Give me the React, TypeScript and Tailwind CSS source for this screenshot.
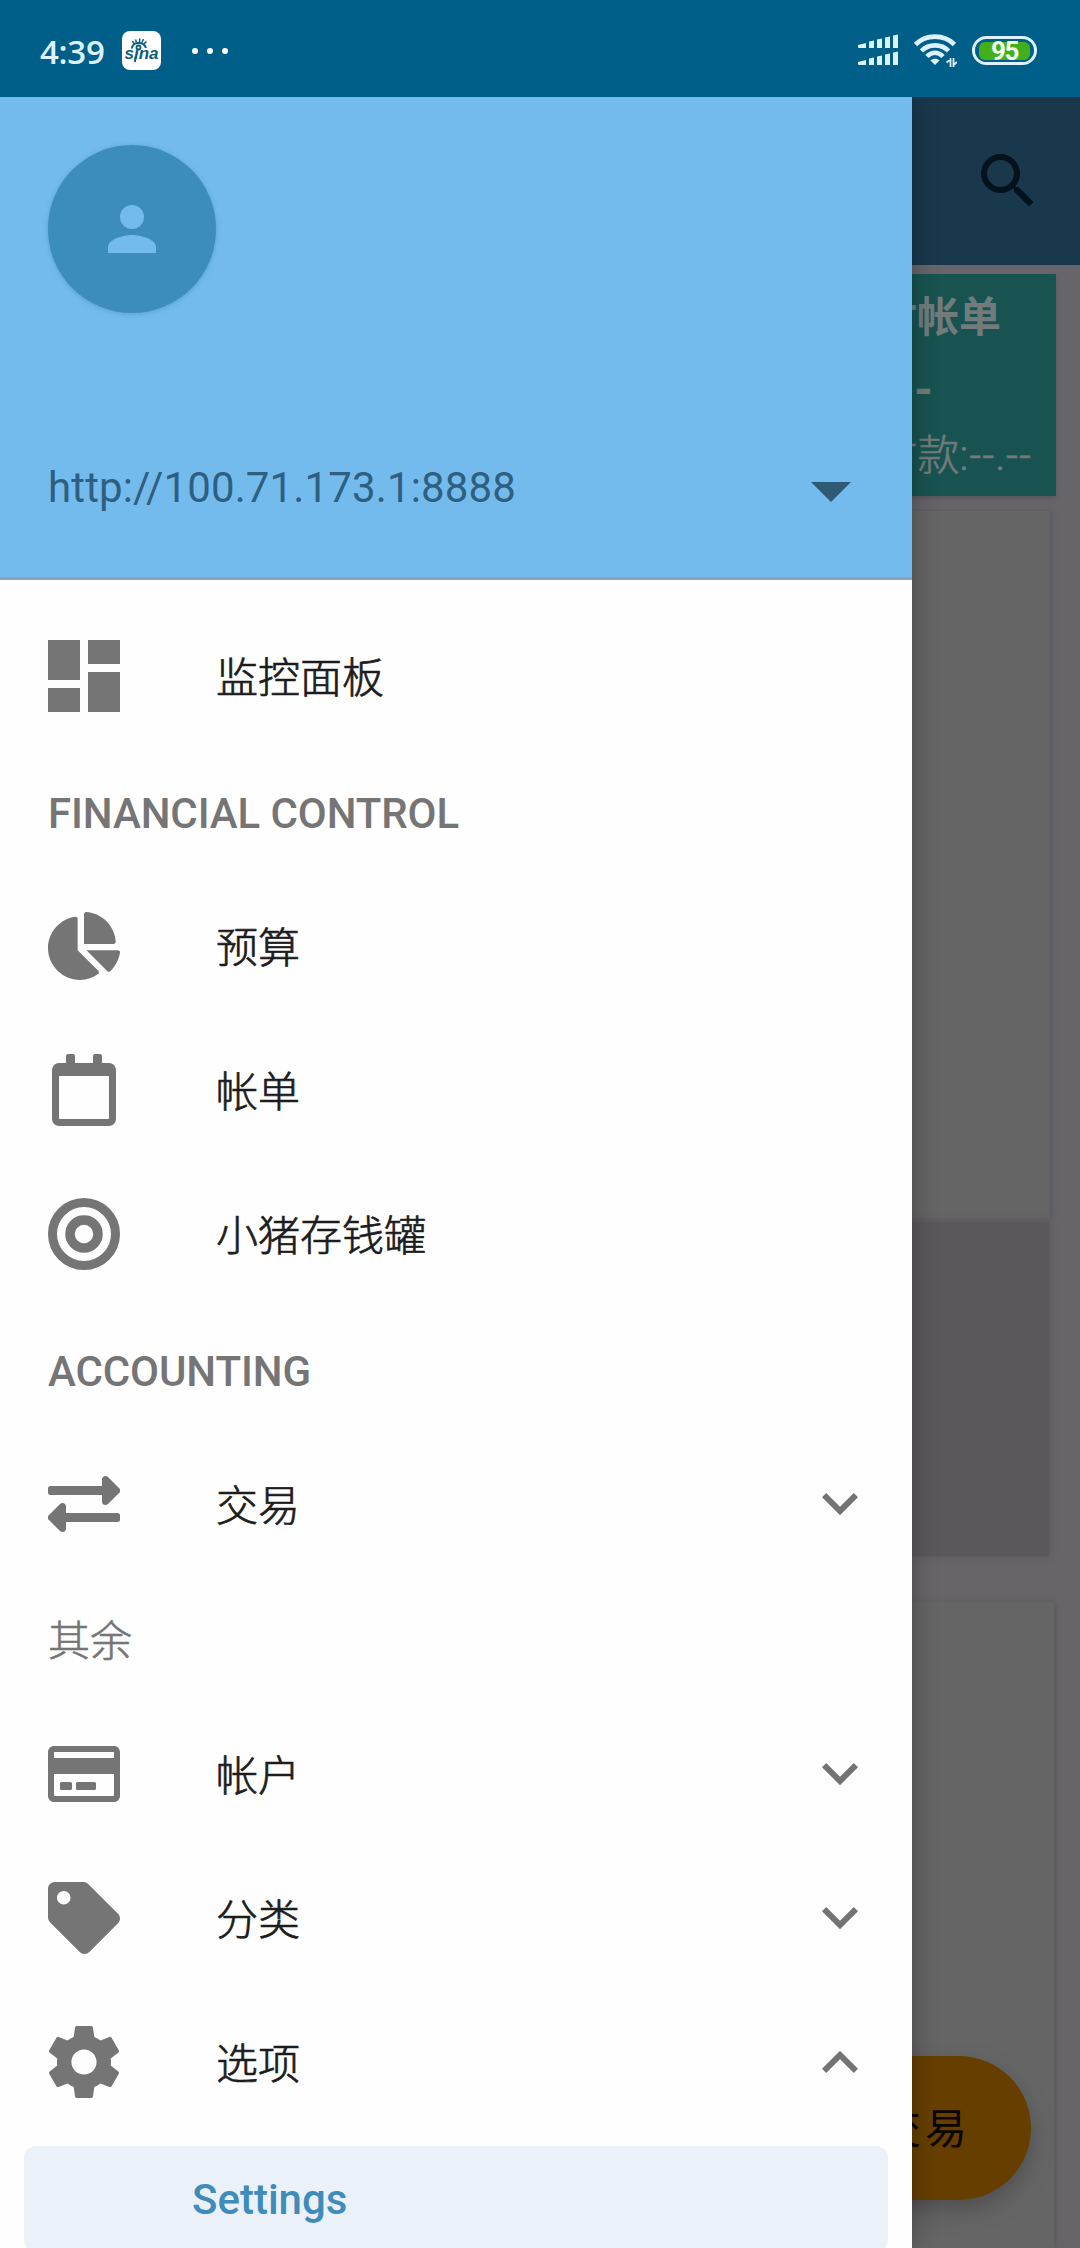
import type { ReactNode } from "react";
import { FaChartPie, FaRegCreditCard, FaTag } from "react-icons/fa";
import { MdSearch } from "react-icons/md";

const DashboardIcon = () => (
  <svg className="size-[72px]" viewBox="0 0 72 72" fill="currentColor">
    <path d="M0 0h32v40H0zM40 0h32v24H40zM0 48h32v24H0zM40 32h32v40H40z" />
  </svg>
);

const CalendarIcon = () => (
  <svg className="size-[72px]" viewBox="0 0 72 72" fill="currentColor">
    <path
      fillRule="evenodd"
      d="M20 0h5a2 2 0 0 1 2 2v7h18V2a2 2 0 0 1 2-2h5a2 2 0 0 1 2 2v7h7a7 7 0 0 1 7 7v49a7 7 0 0 1-7 7H11a7 7 0 0 1-7-7V16a7 7 0 0 1 7-7h7V2a2 2 0 0 1 2-2zM11 22v42a1 1 0 0 0 1 1h48a1 1 0 0 0 1-1V22z"
    />
  </svg>
);

const TargetIcon = () => (
  <svg className="size-[72px]" viewBox="0 0 72 72" fill="none" stroke="currentColor">
    <circle cx="36" cy="36" r="31.5" strokeWidth="9" />
    <circle cx="36" cy="36" r="14" strokeWidth="9.5" />
  </svg>
);

const ExchangeIcon = () => (
  <svg className="size-[72px]" viewBox="0 0 72 72" fill="currentColor">
    <path d="M2.500 18H54v-6.500c0-3.200 3.700-4.700 6-2.500l11 11a3.500 3.500 0 0 1 0 5L60 36c-2.300 2.300-6 .8-6-2.500V27H2.500A2.500 2.500 0 0 1 0 24.500v-4A2.500 2.500 0 0 1 2.500 18z" />
    <path d="M69.500 45H18v-6.500c0-3.200-3.700-4.700-6-2.500L1 47a3.500 3.500 0 0 0 0 5l11 11c2.300 2.300 6 .8 6-2.500V54h51.500a2.500 2.500 0 0 0 2.500-2.500v-4a2.500 2.500 0 0 0-2.500-2.500z" />
  </svg>
);

const GearIcon = () => (
  <svg className="size-[72px]" viewBox="2 2 20 20" fill="currentColor">
    <path d="M19.430 12.980c.04-.32.07-.64.07-.98s-.03-.66-.07-.98l2.110-1.650c.19-.15.24-.42.12-.64l-2-3.460c-.12-.22-.39-.3-.61-.22l-2.490 1c-.52-.4-1.080-.73-1.690-.98l-.38-2.650C14.460 2.180 14.250 2 14 2h-4c-.25 0-.46.18-.49.42l-.38 2.650c-.61.25-1.170.59-1.690.98l-2.490-1c-.23-.09-.49 0-.61.22l-2 3.460c-.13.22-.07.49.12.64l2.110 1.650c-.04.32-.07.65-.07.98s.03.66.07.98l-2.110 1.650c-.19.15-.24.42-.12.64l2 3.460c.12.22.39.3.61.22l2.490-1c.52.4 1.080.73 1.690.98l.38 2.650c.03.24.24.42.49.42h4c.25 0 .46-.18.49-.42l.38-2.650c.61-.25 1.170-.59 1.690-.98l2.490 1c.23.09.49 0 .61-.22l2-3.460c.12-.22.07-.49-.12-.64l-2.110-1.650zM12 15.500c-1.930 0-3.500-1.570-3.500-3.500s1.570-3.500 3.500-3.500 3.500 1.570 3.500 3.500-1.570 3.500-3.500 3.500z" />
  </svg>
);

const Chevron = ({ up = false }: { up?: boolean }) => (
  <svg
    className={up ? "ml-auto h-[22px] w-9 rotate-180 text-[#737373]" : "ml-auto h-[22px] w-9 text-[#737373]"}
    viewBox="0 0 36 22"
    fill="currentColor"
  >
    <path d="M4.200 0L18 13.800 31.800 0 36 4.200l-18 18-18-18z" />
  </svg>
);

function Item({ icon, label, chevron }: { icon: ReactNode; label: string; chevron?: "up" | "down" }) {
  return (
    <div className="flex h-36 shrink-0 items-center pr-[54px] pl-12">
      <div className="flex size-[72px] items-center justify-center text-[#757575]">{icon}</div>
      <span className="ml-24 pt-[5px] text-[42px] leading-[50px] font-light text-[#1c1c1c] [-webkit-text-stroke:0.7px_#1c1c1c]">
        {label}
      </span>
      {chevron && <Chevron up={chevron === "up"} />}
    </div>
  );
}

function Section({ children }: { children: ReactNode }) {
  return (
    <div className="flex h-[126px] shrink-0 items-center px-12 pt-[5px] text-[42px] leading-[50px] font-medium tracking-[-0.1px] text-[#757575]">
      {children}
    </div>
  );
}

function StatusBar() {
  return (
    <div className="flex h-[97px] shrink-0 items-center bg-[#005f89] pt-1 pr-[43px] pl-[40px] text-[#def1ff]">
      <span className="w-[82px] pt-[1px] font-['Open_Sans'] text-[33px] leading-none font-semibold tracking-[-0.3px]">
        4:39
      </span>
      <div className="flex h-[39px] w-[39px] items-center justify-center rounded-[8px] bg-white text-[#0b5d80]">
        <svg className="size-[39px]" viewBox="0 0 39 39" fill="none" stroke="currentColor">
          <path d="M10 17.500C10 10.500 22 10 24 17" strokeWidth="2" />
          <path d="M12 12.500l-1.500-2.500M14.500 11.500l-1-3M17.500 11l.3-3.500M20 11.500l1.500-3.500M22 13l2.500-2.500" strokeWidth="1.500" />
          <circle cx="16.500" cy="16.500" r="2" strokeWidth="1.800" />
          <text
            x="2.500"
            y="27.500"
            textLength="34"
            lengthAdjust="spacingAndGlyphs"
            fill="currentColor"
            stroke="none"
            className="font-['Liberation_Sans'] text-[16px] font-bold italic"
          >
            sına
          </text>
          <path d="M14 25l-1.200 6" strokeWidth="2" />
        </svg>
      </div>
      <div className="ml-[31px] flex gap-[9px]">
        <i className="size-[6px] rounded-full bg-white" />
        <i className="size-[6px] rounded-full bg-white" />
        <i className="size-[6px] rounded-full bg-white" />
      </div>
      <svg className="ml-auto h-[33px] w-[41px]" viewBox="0 0 41 33" fill="currentColor">
        <path d="M0 11l8-2v5H1a1 1 0 0 1-1-1zM11 7.500l5-1V14h-5zM19 5.500l5-1V14h-5zM27 3.500l5-1V14h-5zM35 1.500l5-1V14h-5z" />
        <path d="M0 28l8-2v5H1a1 1 0 0 1-1-1zM11 24.500l5-1V31h-5zM19 22.500l5-1V31h-5zM27 20.500l5-1V31h-5zM35 18.500l5-1V31h-5z" />
      </svg>
      <svg className="ml-[15px] h-[34px] w-[43px]" viewBox="0 0 43 34" fill="none" stroke="currentColor" strokeWidth="4.600">
        <path d="M1.500 10.500C12 0 30 0 40.500 10.500M7.500 17C14.500 9.500 27.500 9.500 34.500 17M13 22.500c4.500-5 11.500-5 16 0" />
        <path d="M21 31l-4.500-4.500c2-2.500 7-2.500 9 0z" fill="currentColor" stroke="none" />
        <path d="M36.500 24v9M32.500 28.500l4-3M39.500 33v-9M43 28l-3.500 3" strokeWidth="1.800" />
      </svg>
      <div className="ml-[15px] flex h-[29px] w-[65px] items-center justify-center rounded-full border-[3px] border-current">
        <div className="flex h-[18px] w-[51px] items-center justify-center rounded-[6px] bg-[#41b01b] font-['Roboto'] text-[26px] leading-none font-bold tracking-[-1.5px] text-[#f2fff0]">
          95
        </div>
      </div>
    </div>
  );
}

/** Home screen, dimmed while the drawer is open. */
function DimmedHome() {
  return (
    <div className="flex h-full flex-col bg-[#676569]">
      <div className="flex h-[168px] shrink-0 items-center justify-end bg-[#19384c] pr-9">
        <MdSearch className="size-[72px] text-[#04121b]" />
      </div>
      <div className="mt-[9px] mr-6 flex h-[222px] shrink-0 flex-col items-end overflow-hidden bg-[#185351] text-[#727b7b] shadow-md">
        <div className="mt-[16px] mr-[55px] text-[42px] leading-[56px] font-bold">待付帐单</div>
        <div className="mt-[20px] mr-[123px] text-[48px] leading-[48px] font-bold">-</div>
        <div className="mt-[17px] mr-[24px] text-[42px] leading-[50px] font-light [-webkit-text-stroke:0.6px_#727b7b]">
          已付款<span className="tracking-[0.9px]">:--.--</span>
        </div>
      </div>
      <div className="mt-[15px] mr-[30px] h-[707px] shrink-0 bg-[#656565] shadow-[2px_0_5px_#59595b]" />
      <div className="mt-[4px] mr-[31px] h-[334px] shrink-0 bg-[#5a585b] shadow-[0_0_6px_#565458]" />
      <div className="mt-[46px] mr-[26px] flex grow items-end justify-end bg-[#656565] shadow-[2px_0_5px_#59595b]">
        <div className="mr-[23px] mb-12 flex h-36 w-[300px] items-center justify-end rounded-full bg-[#663f00] pt-[4px] pr-[60px] text-[42px] leading-[50px] tracking-[4px] text-[#0a0600] shadow-[0_10px_20px_#505052]">
          交易
        </div>
      </div>
    </div>
  );
}

function Drawer() {
  return (
    <div className="absolute inset-y-0 left-0 flex w-[912px] flex-col overflow-hidden bg-[#fefefe] shadow-[0_0_24px_#00000050]">
      <div className="flex h-[483px] shrink-0 flex-col border-b-[3px] border-[#8fa3b3] bg-[#74bbed] pt-[48px] pr-[61px] pl-12">
        <div className="flex size-[168px] items-center justify-center rounded-full bg-[#3c8cbc] shadow-[0_1px_5px_#3c8cbc90]">
          <svg className="size-12" viewBox="0 0 48 48" fill="#74bbed">
            <circle cx="24" cy="12" r="12" />
            <path d="M0 48v-6c0-8 16-12 24-12s24 4 24 12v6z" />
          </svg>
        </div>
        <div className="mt-[150px] flex items-center justify-between text-[#2f5f80]">
          <span className="text-[42px] leading-[50px] tracking-[0.14px]">http://100.71.173.1:8888</span>
          <svg className="mt-2 h-5 w-10" viewBox="0 0 40 20" fill="#2f5a75">
            <path d="M0 0h40L20 20z" />
          </svg>
        </div>
      </div>
      <div className="h-6 shrink-0" />
      <Item icon={<DashboardIcon />} label="监控面板" />
      <Section>FINANCIAL CONTROL</Section>
      <Item icon={<FaChartPie className="h-[68px] w-[72px]" />} label="预算" />
      <Item icon={<CalendarIcon />} label="帐单" />
      <Item icon={<TargetIcon />} label="小猪存钱罐" />
      <Section>ACCOUNTING</Section>
      <Item icon={<ExchangeIcon />} label="交易" chevron="down" />
      <Section>
        <span className="font-light [-webkit-text-stroke:0.6px_#757575]">其余</span>
      </Section>
      <Item icon={<FaRegCreditCard className="h-16 w-[72px]" />} label="帐户" chevron="down" />
      <Item icon={<FaTag className="size-[72px]" />} label="分类" chevron="down" />
      <Item icon={<GearIcon />} label="选项" chevron="up" />
      <div className="mx-6 mt-3 flex h-[106px] shrink-0 items-center rounded-xl bg-[#ebf1f8] pl-[168px] text-[42px] font-medium text-[#3f8cba]">
        Settings
      </div>
    </div>
  );
}

export default function App() {
  return (
    <div className="flex h-[2248px] w-[1080px] flex-col overflow-hidden font-['Roboto','Noto_Sans_CJK_SC',sans-serif]">
      <StatusBar />
      <div className="relative min-h-0 grow overflow-hidden">
        <DimmedHome />
        <Drawer />
      </div>
    </div>
  );
}
